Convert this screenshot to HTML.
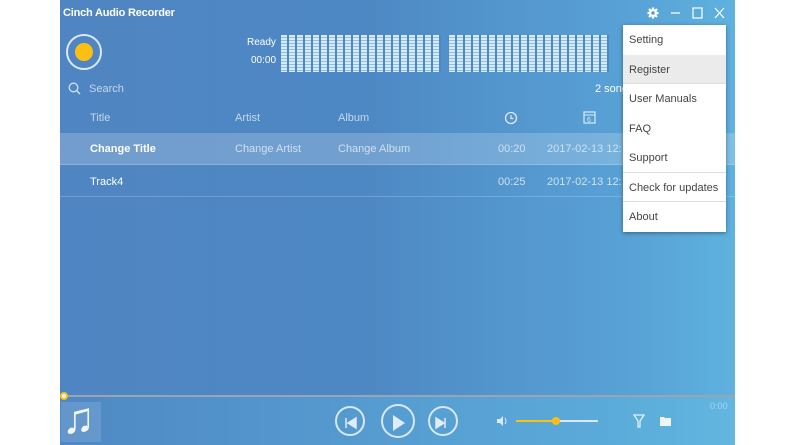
<!DOCTYPE html>
<html><head><meta charset="utf-8"><style>
*{margin:0;padding:0;box-sizing:border-box}
body{width:800px;height:445px;background:#fff;position:relative;overflow:hidden;font-family:"Liberation Sans",sans-serif}
#app{position:absolute;left:60px;top:0;width:675px;height:445px;background:linear-gradient(90deg,#4f85c2 0%,#4e88c4 45%,#58a2d6 85%,#5eb2de 100%);color:#fff}
.t{position:absolute;white-space:nowrap}
.meter{position:absolute;top:35px;height:37px;background:
repeating-linear-gradient(90deg,transparent 0 6px,#4f86c3 6px 8px),
repeating-linear-gradient(180deg,#d6ecf8 0 2px,#8fbfe6 2px 3px)}
.row{position:absolute;left:0;width:675px;font-size:11px}
#bottom{position:absolute;left:0;top:396px;width:675px;height:49px;background:linear-gradient(90deg,#4f88c4,#5aaad9 80%,#62b6df)}
.btn{position:absolute;top:406px;width:30px;height:30px;border:2px solid #d8e8f5;border-radius:50%}
#menu{position:absolute;left:623px;top:25px;width:103px;height:207px;background:#fff;box-shadow:0 1px 4px rgba(0,0,0,.4);font-size:11px;color:#444}
#menu div{height:29.5px;line-height:31px;padding-left:6px}
</style></head><body>
<div id="app">
<div class="t" style="left:3px;top:7px;font-size:11px;font-weight:600;letter-spacing:-0.2px">Cinch Audio Recorder</div>
<div style="position:absolute;left:6px;top:34px;width:36px;height:36px;border:2px solid #dbe8f4;border-radius:50%"></div>
<div style="position:absolute;left:15px;top:43px;width:18px;height:18px;background:#fcbf12;border-radius:50%"></div>
<div class="t" style="left:187px;top:37px;font-size:10px">Ready</div>
<div class="t" style="left:191px;top:55px;font-size:10px">00:00</div>
<div class="meter" style="left:221px;width:160px"></div>
<div class="meter" style="left:389px;width:160px"></div>
<svg style="position:absolute;left:8px;top:82px" width="13" height="13"><circle cx="5.5" cy="5.5" r="4.3" fill="none" stroke="#cfe0f0" stroke-width="1.3"/><line x1="8.6" y1="8.6" x2="12" y2="12" stroke="#cfe0f0" stroke-width="1.4"/></svg>
<div class="t" style="left:29px;top:83px;font-size:11px;color:#c4d8ec">Search</div>
<div class="t" style="left:535px;top:83px;font-size:11px">2 songs</div>
<div class="t" style="left:30px;top:112px;font-size:11px;color:#c4d8ec">Title</div>
<div class="t" style="left:175px;top:112px;font-size:11px;color:#c4d8ec">Artist</div>
<div class="t" style="left:278px;top:112px;font-size:11px;color:#c4d8ec">Album</div>
<svg style="position:absolute;left:444px;top:111px" width="14" height="14"><circle cx="7" cy="7" r="5.5" fill="none" stroke="#dce9f5" stroke-width="1.3"/><path d="M7 4v3.5h2.5" fill="none" stroke="#dce9f5" stroke-width="1.2"/></svg>
<svg style="position:absolute;left:523px;top:110px" width="13" height="14"><rect x="1" y="2" width="11" height="11" fill="none" stroke="#dce9f5" stroke-width="1.2"/><line x1="1" y1="5" x2="12" y2="5" stroke="#dce9f5"/><text x="4" y="12" font-size="7" fill="#dce9f5">6</text></svg>
<div class="row" style="top:133px;height:32px;background:rgba(255,255,255,.2);border-bottom:1px solid rgba(255,255,255,.2)">
<span class="t" style="left:30px;top:10px;font-weight:bold">Change Title</span>
<span class="t" style="left:175px;top:10px;color:#cfe0f0">Change Artist</span>
<span class="t" style="left:278px;top:10px;color:#cfe0f0">Change Album</span>
<span class="t" style="left:438px;top:10px;color:#cfe0f0">00:20</span>
<span class="t" style="left:487px;top:10px;color:#cfe0f0">2017-02-13 12:</span></div>
<div class="row" style="top:166px;height:31px;border-bottom:1px solid rgba(255,255,255,.2)">
<span class="t" style="left:30px;top:10px">Track4</span>
<span class="t" style="left:438px;top:10px;color:#cfe0f0">00:25</span>
<span class="t" style="left:487px;top:10px;color:#cfe0f0">2017-02-13 12:</span></div>
<svg style="position:absolute;left:586px;top:6px" width="90" height="14"><g stroke="#fff" stroke-width="2.2"><line x1="7" y1="1.5" x2="7" y2="12.5"/><line x1="1.5" y1="7" x2="12.5" y2="7"/><line x1="3" y1="3" x2="11" y2="11"/><line x1="11" y1="3" x2="3" y2="11"/></g><circle cx="7" cy="7" r="4" fill="#fff"/><circle cx="7" cy="7" r="1.7" fill="#5099d0"/><line x1="25" y1="7" x2="34" y2="7" stroke="#fff" stroke-width="1.3"/><rect x="47" y="2" width="9" height="10" fill="none" stroke="#fff" stroke-width="1.2"/><path d="M69 2l9 10M78 2l-9 10" stroke="#fff" stroke-width="1.2"/></svg>
<div id="bottom"></div>
<div style="position:absolute;left:0;top:395px;width:675px;height:2px;background:#9aa5b2"></div>
<div style="position:absolute;left:0;top:392px;width:8px;height:8px;background:#fff;border:2px solid #fcbf12;border-radius:50%"></div>
<div class="t" style="left:650px;top:401px;font-size:9px;color:#a9d3ee">0:00</div>
<div style="position:absolute;left:1px;top:402px;width:40px;height:40px;background:rgba(255,255,255,.12)"></div>
<div class="t" style="left:2px;top:396px;font-size:44px;line-height:46px;color:#f2f6fa">♫</div>
<div class="btn" style="left:275px"></div><div class="btn" style="left:321px;width:34px;height:34px;top:404px"></div><div class="btn" style="left:368px"></div>
<svg style="position:absolute;left:275px;top:404px" width="130" height="36"><path d="M11 14v10M21 14l-8 5 8 5z" fill="#e0ecf7" stroke="#e0ecf7" stroke-width="1.5"/><path d="M58 11l12 8-12 8z" fill="#e0ecf7"/><path d="M110 14v10M101 14l8 5-8 5z" fill="#e0ecf7" stroke="#e0ecf7" stroke-width="1.5"/></svg>
<svg style="position:absolute;left:436px;top:415px" width="12" height="12"><path d="M1 4h3l3-3v10l-3-3h-3z" fill="#dce9f5"/><path d="M9 3q2 3 0 6" fill="none" stroke="#dce9f5"/></svg>
<div style="position:absolute;left:456px;top:420px;width:40px;height:2px;background:#fcbf12"></div>
<div style="position:absolute;left:496px;top:420px;width:42px;height:2px;background:#d8e8f5"></div>
<div style="position:absolute;left:492px;top:417px;width:8px;height:8px;background:#fcbf12;border-radius:50%"></div>
<svg style="position:absolute;left:573px;top:414px" width="40" height="14"><path d="M1 1h10l-4 6v6h-2v-6z" fill="none" stroke="#e6eff8" stroke-width="1.3"/><path d="M27 3h4l1 1h6v8h-11z" fill="#eef4fa"/></svg>
</div>
<div id="menu">
<div>Setting</div>
<div style="background:#ebebeb;border-bottom:1px solid #ddd">Register</div>
<div>User Manuals</div>
<div>FAQ</div>
<div style="border-bottom:1px solid #ddd">Support</div>
<div style="border-bottom:1px solid #ddd">Check for updates</div>
<div>About</div>
</div>
</body></html>
